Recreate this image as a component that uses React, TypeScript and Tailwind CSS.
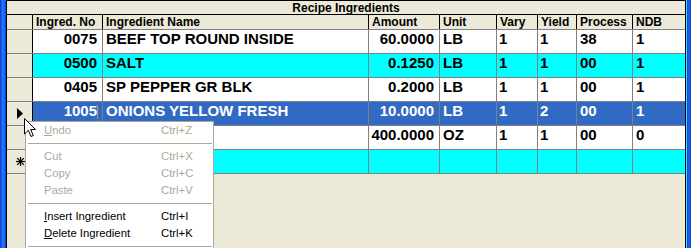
import React from "react";

type Row = {
  no: string;
  name: string;
  amount: string;
  unit: string;
  vary: string;
  yld: string;
  proc: string;
  ndb: string;
  kind: "white" | "cyan" | "selected" | "new";
};

const rows: Row[] = [
  { no: "0075", name: "BEEF TOP ROUND INSIDE", amount: "60.0000", unit: "LB", vary: "1", yld: "1", proc: "38", ndb: "1", kind: "white" },
  { no: "0500", name: "SALT", amount: "0.1250", unit: "LB", vary: "1", yld: "1", proc: "00", ndb: "1", kind: "cyan" },
  { no: "0405", name: "SP PEPPER GR BLK", amount: "0.2000", unit: "LB", vary: "1", yld: "1", proc: "00", ndb: "1", kind: "white" },
  { no: "1005", name: "ONIONS YELLOW FRESH", amount: "10.0000", unit: "LB", vary: "1", yld: "2", proc: "00", ndb: "1", kind: "selected" },
  // no / name sit under the context menu
  { no: "", name: "", amount: "400.0000", unit: "OZ", vary: "1", yld: "1", proc: "00", ndb: "0", kind: "white" },
  { no: "", name: "", amount: "", unit: "", vary: "", yld: "", proc: "", ndb: "", kind: "new" },
];

const cols = "grid grid-cols-[26px_70px_266px_71px_57px_41px_39px_56px_52px]";

function RowMarker({ kind }: { kind: Row["kind"] }) {
  if (kind === "selected") {
    return (
      <svg width="8" height="12" viewBox="0 0 8 12" className="ml-[10px] mt-[6px]">
        <polygon points="0,0 0,11 6,5.5" fill="#000" />
      </svg>
    );
  }
  if (kind === "new") {
    return (
      <svg width="9" height="9" viewBox="0 0 9 9" className="ml-[9px] mt-[7px]">
        <g stroke="#000" strokeWidth="1.2">
          <line x1="4.5" y1="0" x2="4.5" y2="9" />
          <line x1="0" y1="4.5" x2="9" y2="4.5" />
          <line x1="1.2" y1="1.2" x2="7.8" y2="7.8" />
          <line x1="7.8" y1="1.2" x2="1.2" y2="7.8" />
        </g>
      </svg>
    );
  }
  return null;
}

function DataRow({ row }: { row: Row }) {
  const bg =
    row.kind === "selected"
      ? "bg-[#316ac5] text-white"
      : row.kind === "white"
        ? "bg-white text-black"
        : "bg-[#00ffff] text-black";
  const cell = `border-r border-[#808080] text-[15px] leading-[18px] font-bold whitespace-nowrap overflow-hidden ${bg}`;

  return (
    <div className={`${cols} h-[24px] border-b border-[#808080]`}>
      <div className="border-r border-black bg-[#ece9d8]">
        <RowMarker kind={row.kind} />
      </div>
      <div className={`${cell} relative text-right pr-[5px]`}>
        {row.no}
        {row.kind === "selected" && (
          <span className="absolute left-[64px] top-[3px] h-[14px] w-px bg-[#a89c74]" />
        )}
      </div>
      <div className={`${cell} pl-[3px]`}>{row.name}</div>
      <div className={`${cell} text-right pr-[5px]`}>{row.amount}</div>
      <div className={`${cell} pl-[3px]`}>{row.unit}</div>
      <div className={`${cell} pl-[2px]`}>{row.vary}</div>
      <div className={`${cell} pl-[2px]`}>{row.yld}</div>
      <div className={`${cell} pl-[3px]`}>{row.proc}</div>
      <div className={`${cell} pl-[3px] border-r-0`}>{row.ndb}</div>
    </div>
  );
}

function MenuItem({
  label,
  shortcut,
  ul = -1,
  disabled,
}: {
  label: string;
  shortcut: string;
  ul?: number;
  disabled?: boolean;
}) {
  return (
    <div
      className={`flex h-[17px] items-center pl-[18px] ${
        disabled ? "text-[#aca899]" : "text-black"
      }`}
    >
      <span className="w-[117px]">
        {ul < 0 ? (
          label
        ) : (
          <>
            {label.slice(0, ul)}
            <span className="underline underline-offset-[1px]">{label.slice(ul, ul + 1)}</span>
            {label.slice(ul + 1)}
          </>
        )}
      </span>
      <span>{shortcut}</span>
    </div>
  );
}

function Separator() {
  return (
    <div className="flex h-[9px] items-center ml-[2px] mr-[1px]">
      <div className="h-px w-full bg-[#aca899]" />
    </div>
  );
}

export default function App() {
  const head = "border-r border-black pl-[3px] text-[12px] leading-[14px] font-bold text-black whitespace-nowrap";

  return (
    <div className="relative flex h-[248px] w-[691px] overflow-hidden bg-[#ece9d8] font-['Liberation_Sans',Arial,sans-serif]">
      {/* window frame left */}
      <div className="w-[6px] bg-linear-to-r from-[#0a3cd0] via-[#2a7cf8] to-[#0848dc]" />
      <div className="w-px bg-black" />

      {/* datasheet */}
      <div className="flex w-[678px] flex-col">
        <div className="h-[15px] border-y border-black pt-[1px] text-center text-[12px] leading-[12px] font-bold text-black">
          Recipe Ingredients
        </div>
        <div className={`${cols} h-[15px] border-b border-[#808080]`}>
          <div className="border-r border-black" />
          <div className={`${head} pl-[2px]`}>Ingred. No</div>
          <div className={head}>Ingredient Name</div>
          <div className={head}>Amount</div>
          <div className={head}>Unit</div>
          <div className={head}>Vary</div>
          <div className={head}>Yield</div>
          <div className={head}>Process</div>
          <div className={`${head} border-r-0`}>NDB</div>
        </div>
        {rows.map((r, i) => (
          <DataRow key={i} row={r} />
        ))}
      </div>

      {/* window frame right */}
      <div className="w-px bg-black" />
      <div className="w-px bg-[#3fe3ff]" />
      <div className="w-[4px] bg-linear-to-r from-[#0b46d8] via-[#1c62ec] to-[#0a3fcf]" />

      {/* context menu */}
      <div className="absolute left-[25px] top-[121px] h-[140px] w-[189px] border border-[#aca899] bg-white text-[11.3px]">
        <MenuItem label="Undo" shortcut="Ctrl+Z" ul={0} disabled />
        <Separator />
        <MenuItem label="Cut" shortcut="Ctrl+X" disabled />
        <MenuItem label="Copy" shortcut="Ctrl+C" disabled />
        <MenuItem label="Paste" shortcut="Ctrl+V" disabled />
        <Separator />
        <MenuItem label="Insert Ingredient" shortcut="Ctrl+I" ul={0} />
        <MenuItem label="Delete Ingredient" shortcut="Ctrl+K" ul={0} />
        <Separator />
      </div>

      {/* mouse pointer */}
      <svg
        width="13"
        height="20"
        viewBox="0 0 13 20"
        className="absolute left-[24px] top-[118px]"
      >
        <polygon
          points="0.5,0.5 0.5,16 4.3,12.3 7,18.5 9.3,17.5 6.7,11.5 11.5,11.5"
          fill="#fff"
          stroke="#000"
          strokeWidth="1"
          strokeLinejoin="miter"
        />
      </svg>
    </div>
  );
}
